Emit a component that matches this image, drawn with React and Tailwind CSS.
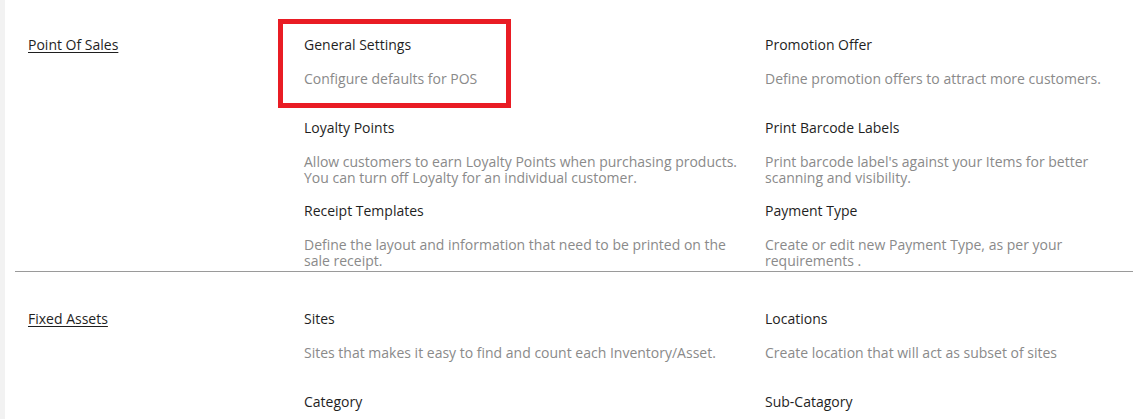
const sections = [
  {
    label: 'Point Of Sales',
    items: [
      { title: 'General Settings', desc: 'Configure defaults for POS', highlight: true },
      { title: 'Promotion Offer', desc: 'Define promotion offers to attract more customers.' },
      {
        title: 'Loyalty Points',
        desc: 'Allow customers to earn Loyalty Points when purchasing products. You can turn off Loyalty for an individual customer.',
      },
      { title: 'Print Barcode Labels', desc: "Print barcode label's against your Items for better scanning and visibility." },
      { title: 'Receipt Templates', desc: 'Define the layout and information that need to be printed on the sale receipt.' },
      { title: 'Payment Type', desc: 'Create or edit new Payment Type, as per your requirements .' },
    ],
  },
  {
    label: 'Fixed Assets',
    items: [
      { title: 'Sites', desc: 'Sites that makes it easy to find and count each Inventory/Asset.' },
      { title: 'Locations', desc: 'Create location that will act as subset of sites' },
      { title: 'Category', desc: '' },
      { title: 'Sub-Catagory', desc: '' },
    ],
  },
];

const SettingItem = ({ title, desc, highlight }) => (
  <div className="relative pr-4">
    {highlight && (
      <div className="absolute -left-[26px] -top-[18px] w-[233px] h-[89px] border-[5px] border-[#e91c24] pointer-events-none" />
    )}
    <div className="text-[14px] leading-4 text-[#1f1f1f]">{title}</div>
    {desc && <div className="mt-[18px] min-h-[32px] text-[14px] leading-4 text-[#8a8a8a]">{desc}</div>}
  </div>
);

export default function App() {
  return (
    <div
      className="flex min-h-screen bg-white"
      style={{ fontFamily: '"Open Sans", "Liberation Sans", sans-serif' }}
    >
      <div className="w-[5px] shrink-0 bg-[#f2f2f2]" />
      <div className="flex-1 ml-[10px] mr-[10px]">
        {sections.map((section, i) => (
          <div
            key={section.label}
            className={`flex ${i === 0 ? 'pt-[37px] pb-[2px] border-b border-[#9a9a9a]' : 'pt-[39px]'}`}
          >
            <div className="w-[289px] shrink-0 pl-[13px] text-[14px] leading-4">
              <a href="#" className="text-[#1f1f1f] underline underline-offset-2">
                {section.label}
              </a>
            </div>
            <div className="flex-1 grid grid-cols-[461px_1fr] gap-y-[17px]">
              {section.items.map((item) => (
                <SettingItem key={item.title} {...item} />
              ))}
            </div>
          </div>
        ))}
      </div>
    </div>
  );
}
